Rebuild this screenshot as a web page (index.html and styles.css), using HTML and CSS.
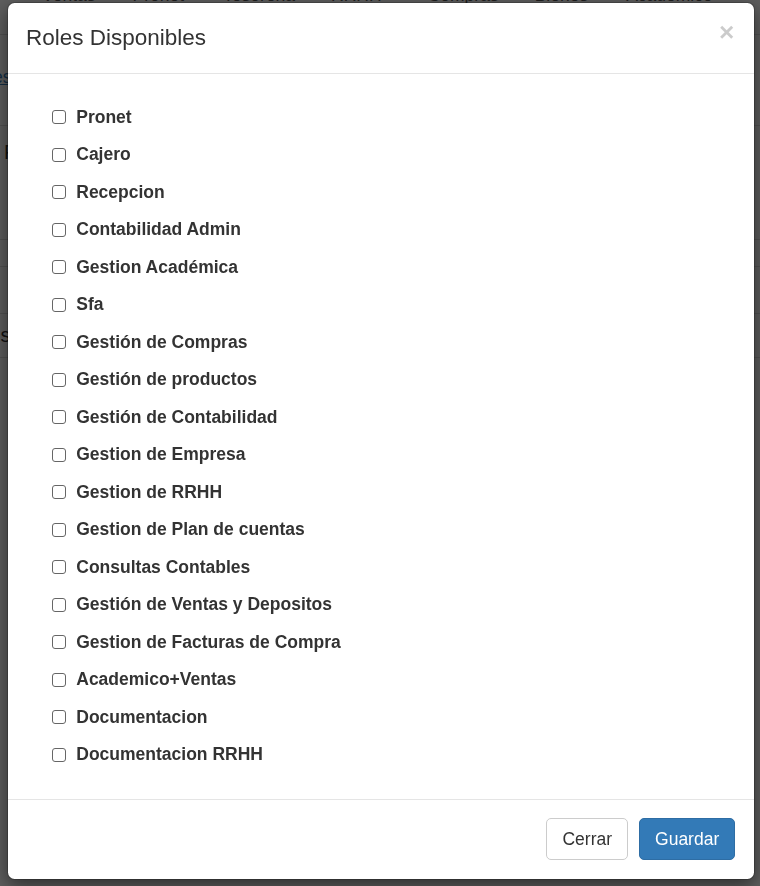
FILE: index.html
```html
<!DOCTYPE html>
<html lang="es">
<head>
<meta charset="utf-8">
<title>Roles Disponibles</title>
<link rel="stylesheet" href="styles.css">
</head>
<body>
<div class="page">
  <nav class="topnav">
    <span class="nav-item n1">Ventas</span>
    <span class="nav-item n2">Pronet</span>
    <span class="nav-item n3">Tesoreria</span>
    <span class="nav-item n4">RRHH</span>
    <span class="nav-item n5">Compras</span>
    <span class="nav-item n6">Bienes</span>
    <span class="nav-item n7">Academico</span>
  </nav>
  <div class="content">
    <div class="crumb"><a class="crumb-link">Clases</a></div>
    <div class="row r1"></div>
    <div class="row r2"><span class="cell-text">P</span></div>
    <div class="row r3"></div>
    <div class="row r4"></div>
    <div class="row r5"><span class="cell-text">is</span></div>
  </div>
</div>

<div class="backdrop"></div>

<div class="modal">
  <div class="modal-header">
    <h4 class="modal-title">Roles Disponibles</h4>
    <button class="close" type="button">×</button>
  </div>
  <div class="modal-body">
    <ul class="role-list">
      <li class="role"><span class="cb"></span><span class="role-name">Pronet</span></li>
      <li class="role"><span class="cb"></span><span class="role-name">Cajero</span></li>
      <li class="role"><span class="cb"></span><span class="role-name">Recepcion</span></li>
      <li class="role"><span class="cb"></span><span class="role-name">Contabilidad Admin</span></li>
      <li class="role"><span class="cb"></span><span class="role-name">Gestion Académica</span></li>
      <li class="role"><span class="cb"></span><span class="role-name">Sfa</span></li>
      <li class="role"><span class="cb"></span><span class="role-name">Gestión de Compras</span></li>
      <li class="role"><span class="cb"></span><span class="role-name">Gestión de productos</span></li>
      <li class="role"><span class="cb"></span><span class="role-name">Gestión de Contabilidad</span></li>
      <li class="role"><span class="cb"></span><span class="role-name">Gestion de Empresa</span></li>
      <li class="role"><span class="cb"></span><span class="role-name">Gestion de RRHH</span></li>
      <li class="role"><span class="cb"></span><span class="role-name">Gestion de Plan de cuentas</span></li>
      <li class="role"><span class="cb"></span><span class="role-name">Consultas Contables</span></li>
      <li class="role"><span class="cb"></span><span class="role-name">Gestión de Ventas y Depositos</span></li>
      <li class="role"><span class="cb"></span><span class="role-name">Gestion de Facturas de Compra</span></li>
      <li class="role"><span class="cb"></span><span class="role-name">Academico+Ventas</span></li>
      <li class="role"><span class="cb"></span><span class="role-name">Documentacion</span></li>
      <li class="role"><span class="cb"></span><span class="role-name">Documentacion RRHH</span></li>
    </ul>
  </div>
  <div class="modal-footer">
    <button class="btn btn-default" type="button">Cerrar</button>
    <button class="btn btn-primary" type="button">Guardar</button>
  </div>
</div>
</body>
</html>
```

FILE: styles.css
```css
* { box-sizing: border-box; }

html, body {
  margin: 0;
  height: 100%;
}

body {
  background: #fff;
  font-family: "Liberation Sans", Arial, sans-serif;
  color: #333;
  overflow: hidden;
}

/* background page (mostly hidden behind the modal) */
.page {
  position: relative;
}

.topnav {
  display: flex;
  height: 50px;
  margin-top: -15px;
  font-size: 17.5px;
  line-height: 20px;
  color: #555;
  border-bottom: 1px solid #ddd;
}

.nav-item { display: block; }
.n1 { margin-left: 42px; }
.n2 { margin-left: 37px; }
.n3 { margin-left: 39px; }
.n4 { margin-left: 36px; }
.n5 { margin-left: 46px; }
.n6 { margin-left: 36px; }
.n7 { margin-left: 38px; }

.content {
  display: flex;
  flex-direction: column;
}

.crumb {
  height: 71px;
  padding-top: 32px;
  font-size: 17.5px;
  line-height: 20px;
  margin-left: -42px;
}

.crumb-link { color: #337ab7; text-decoration: underline; }

.row {
  border-bottom: 1px solid #ddd;
  font-size: 20px;
  line-height: 22px;
}

.r1 { height: 20px; }
.r2 { height: 114px; padding-top: 15px; padding-left: 4px; }
.r3 { height: 27px; }
.r4 { height: 47px; }
.r5 { height: 44px; padding-top: 10px; margin-left: -4px; }

.cell-text { color: #333; }

.backdrop {
  position: fixed;
  inset: 0;
  background: rgba(0, 0, 0, 0.63);
}

/* modal */
.modal {
  position: fixed;
  left: 7px;
  top: 2px;
  width: 748px;
  background: #fff;
  border: 1px solid rgba(0, 0, 0, 0.2);
  border-radius: 7.5px;
  box-shadow: 0 6px 19px rgba(0, 0, 0, 0.5);
  background-clip: padding-box;
}

.modal-header {
  display: flex;
  align-items: flex-start;
  justify-content: space-between;
  padding: 18.75px 18.75px 18.75px 18px;
  border-bottom: 1px solid #e5e5e5;
}

.modal-title {
  margin: 0;
  font-size: 22.5px;
  font-weight: 400;
  line-height: 32.14px;
  color: #333;
}

.close {
  margin-top: -3px;
  margin-right: 1px;
  padding: 0;
  border: 0;
  background: transparent;
  font-family: "Liberation Sans", Arial, sans-serif;
  font-size: 26.25px;
  font-weight: 700;
  line-height: 1;
  color: #000;
  opacity: 0.2;
  text-shadow: 0 1px 0 #fff;
}

.modal-body {
  padding: 18.75px;
}

.role-list {
  list-style: none;
  margin: 0;
  padding: 12.5px 0 12.5px 25px;
  display: flex;
  flex-direction: column;
  gap: 12.5px;
}

.role {
  display: flex;
  align-items: center;
  height: 25px;
  gap: 10.5px;
}

.cb {
  flex: none;
  width: 14px;
  height: 14px;
  border: 1px solid #666;
  border-radius: 3px;
  background: #fff;
}

.role-name {
  font-size: 17.5px;
  font-weight: 700;
  color: #333;
  line-height: 25px;
}

.modal-footer {
  display: flex;
  justify-content: flex-end;
  gap: 11px;
  padding: 18.75px;
  border-top: 1px solid #e5e5e5;
}

.btn {
  font-family: "Liberation Sans", Arial, sans-serif;
  font-size: 17.5px;
  line-height: 25px;
  padding: 7.5px 15px;
  border: 1px solid transparent;
  border-radius: 5px;
  height: 42px;
}

.btn-default {
  background: #fff;
  border-color: #ccc;
  color: #333;
}

.btn-primary {
  background: #337ab7;
  border-color: #2e6da4;
  color: #fff;
}
```
